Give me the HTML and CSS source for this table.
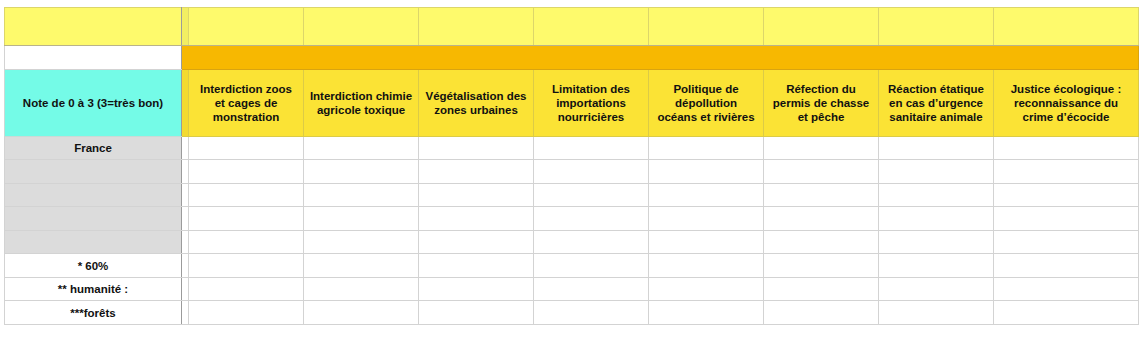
FILE: index.html
```html
<!DOCTYPE html>
<html lang="fr">
<head>
<meta charset="utf-8">
<link rel="stylesheet" href="styles.css">
</head>
<body>
<table class="sheet">
  <colgroup>
    <col class="c-label">
    <col class="c-div">
    <col class="c-std"><col class="c-std"><col class="c-std"><col class="c-std">
    <col class="c-std"><col class="c-std"><col class="c-std">
    <col class="c-last">
  </colgroup>
  <tr class="r-top">
    <td class="label"></td><td class="div"></td>
    <td></td><td></td><td></td><td></td><td></td><td></td><td></td><td></td>
  </tr>
  <tr class="r-band">
    <td class="label"></td>
    <td class="band" colspan="9"></td>
  </tr>
  <tr class="r-head">
    <td class="label">Note de 0 à 3 (3=très bon)</td><td class="div"></td>
    <td>Interdiction zoos et cages de monstration</td>
    <td>Interdiction chimie agricole toxique</td>
    <td>Végétalisation des zones urbaines</td>
    <td>Limitation des importations nourricières</td>
    <td>Politique de dépollution océans et rivières</td>
    <td>Réfection du permis de chasse et pêche</td>
    <td>Réaction étatique en cas d’urgence sanitaire animale</td>
    <td>Justice écologique : reconnaissance du crime d’écocide</td>
  </tr>
  <tr class="r-data gray">
    <td class="label">France</td><td class="div"></td>
    <td></td><td></td><td></td><td></td><td></td><td></td><td></td><td></td>
  </tr>
  <tr class="r-data gray odd">
    <td class="label"></td><td class="div"></td>
    <td></td><td></td><td></td><td></td><td></td><td></td><td></td><td></td>
  </tr>
  <tr class="r-data gray">
    <td class="label"></td><td class="div"></td>
    <td></td><td></td><td></td><td></td><td></td><td></td><td></td><td></td>
  </tr>
  <tr class="r-data gray odd">
    <td class="label"></td><td class="div"></td>
    <td></td><td></td><td></td><td></td><td></td><td></td><td></td><td></td>
  </tr>
  <tr class="r-data gray">
    <td class="label"></td><td class="div"></td>
    <td></td><td></td><td></td><td></td><td></td><td></td><td></td><td></td>
  </tr>
  <tr class="r-data odd">
    <td class="label">* 60%</td><td class="div"></td>
    <td></td><td></td><td></td><td></td><td></td><td></td><td></td><td></td>
  </tr>
  <tr class="r-data">
    <td class="label">** humanité :</td><td class="div"></td>
    <td></td><td></td><td></td><td></td><td></td><td></td><td></td><td></td>
  </tr>
  <tr class="r-data odd">
    <td class="label">***forêts</td><td class="div"></td>
    <td></td><td></td><td></td><td></td><td></td><td></td><td></td><td></td>
  </tr>
</table>
</body>
</html>
```
FILE: styles.css
```css
html, body {
  margin: 0;
  padding: 0;
  background: #ffffff;
}
body {
  padding: 7px 0 0 4px;
  font-family: "Liberation Sans", Arial, Helvetica, sans-serif;
  color: #111111;
}
.sheet {
  border-collapse: collapse;
  table-layout: fixed;
  width: 1134px;
  font-size: 11.5px;
  font-weight: bold;
  line-height: 14px;
}
.c-label { width: 177px; }
.c-div { width: 7px; }
.c-std { width: 115px; }
.c-last { width: 145px; }
.sheet td {
  border: 1px solid #d3d3d3;
  padding: 0 2px;
  text-align: center;
  vertical-align: middle;
  overflow: hidden;
  white-space: normal;
}
.sheet td.div {
  padding: 0;
  border-left: 1px solid #9b9b9b;
}
.sheet td.label {
  border-right: 1px solid #9b9b9b;
}
.r-top td {
  height: 37px;
  background: #fefa6c;
  border-color: #dcd66a;
  border-bottom-color: #b9b38a;
}
.r-top td.div { background: #f2ee62; }
.r-band td {
  height: 23px;
  background: #ffffff;
}
.r-band td.band {
  background: #f7b801;
  border-color: #d9a410;
}
.r-head td {
  height: 66px;
  background: #fbe335;
  border-color: #dccb46;
  padding: 0 5px;
}
.r-head td.label {
  background: #74fbe7;
  border-color: #c9dad6;
  border-right-color: #9b9b9b;
}
.r-head td.div { background: #f3da30; padding: 0; }
.r-data td {
  height: 22px;
  background: #ffffff;
  padding-top: 0;
  padding-bottom: 0;
}
.r-data.odd td { height: 23px; }
.r-data.gray td.label { background: #dcdcdc; }
```
